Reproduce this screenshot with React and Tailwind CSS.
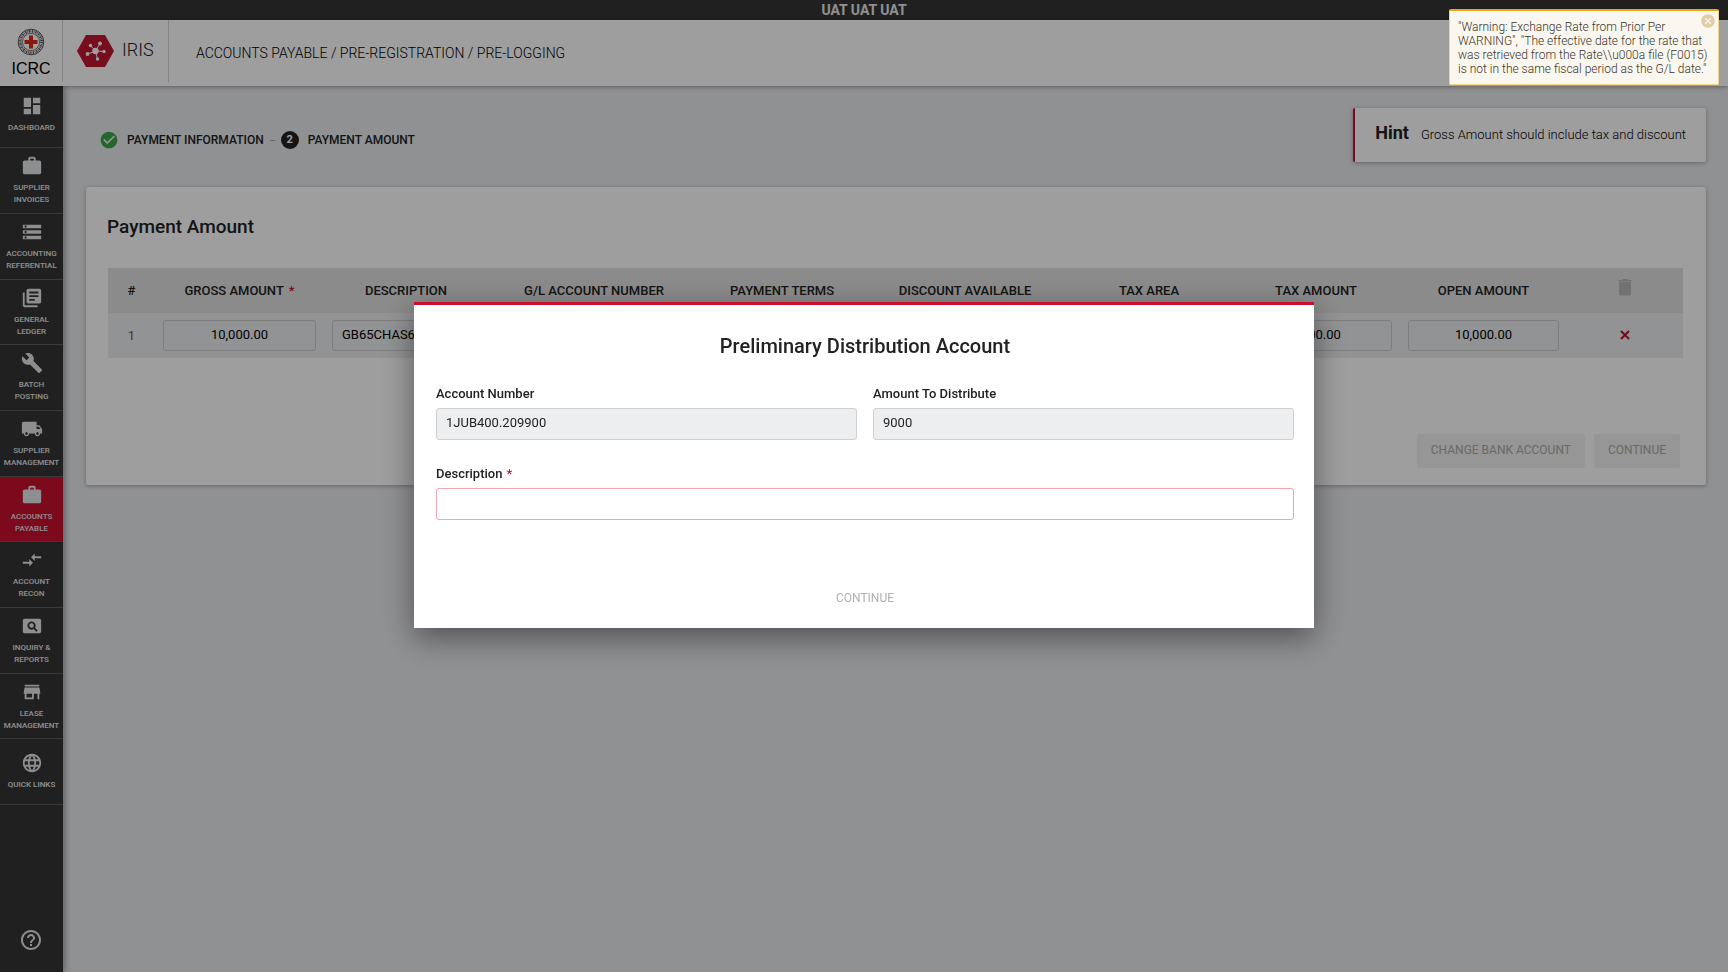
import { Fragment } from "react";
import {
  MdDashboard, MdWork, MdStorage, MdLibraryBooks, MdBuild, MdLocalShipping,
  MdCompareArrows, MdPageview, MdStore, MdLanguage, MdHelpOutline,
  MdCheckCircle, MdCancel,
} from "react-icons/md";

const NAV = [
  { label: ["Dashboard"], Icon: MdDashboard },
  { label: ["Supplier", "Invoices"], Icon: MdWork },
  { label: ["Accounting", "Referential"], Icon: MdStorage },
  { label: ["General", "Ledger"], Icon: MdLibraryBooks },
  { label: ["Batch", "Posting"], Icon: MdBuild },
  { label: ["Supplier", "Management"], Icon: MdLocalShipping },
  { label: ["Accounts", "Payable"], Icon: MdWork, active: true },
  { label: ["Account", "Recon"], Icon: MdCompareArrows },
  { label: ["Inquiry &", "Reports"], Icon: MdPageview },
  { label: ["Lease", "Management"], Icon: MdStore },
  { label: ["Quick Links"], Icon: MdLanguage },
];

const COLUMNS = [
  { title: "Gross Amount", width: 169, value: "10,000.00", required: true, center: true },
  { title: "Description", width: 164, value: "GB65CHAS6" },
  { title: "G/L Account Number", width: 212, value: "" },
  { title: "Payment Terms", width: 164, value: "" },
  { title: "Discount Available", width: 202, value: "", center: true },
  { title: "Tax Area", width: 166, value: "" },
  { title: "Tax Amount", width: 168, value: "1,000.00", center: true },
  { title: "Open Amount", width: 167, value: "10,000.00", center: true },
];

function IcrcLogo() {
  return (
    <svg viewBox="0 0 28 28" className="size-7" aria-hidden="true">
      <circle cx="14" cy="14" r="12.800" fill="#fff" stroke="#444" strokeWidth="0.9" />
      <circle cx="14" cy="14" r="10.700" fill="none" stroke="#555" strokeWidth="2.600" strokeDasharray="1.300 0.700 0.600 0.800" />
      <circle cx="14" cy="14" r="8.600" fill="#fff" stroke="#444" strokeWidth="0.700" />
      <path d="M12 7.500h4v4.500h4.500v4H16v4.500h-4V16H7.500v-4H12z" fill="#e2231a" />
    </svg>
  );
}

function IrisLogo() {
  return (
    <svg viewBox="0 0 37 32" className="h-8 w-[37px]" aria-hidden="true">
      <path d="M9 0h19l9 16-9 16H9L0 16z" fill="#c2152f" />
      <path
        d="M18.500 16L13.500 10.500M18.500 16L23 8.500M18.500 16L10.500 19M18.500 16L20.500 24M18.500 16L27 16.500"
        stroke="#fff"
        strokeWidth="1"
      />
      <g fill="#fff">
        <circle cx="18.500" cy="16" r="3.200" />
        <circle cx="13.500" cy="10.500" r="1.700" />
        <circle cx="23" cy="8.500" r="1.900" />
        <circle cx="10.500" cy="19" r="1.900" />
        <circle cx="20.500" cy="24" r="1.700" />
        <circle cx="27" cy="16.500" r="1.700" />
      </g>
    </svg>
  );
}

function TrashIcon() {
  return (
    <svg viewBox="0 0 14 17" className="mx-auto h-[17px] w-[14px]" fill="#b8b8b8" aria-hidden="true">
      <path d="M1 3h12v12a1.500 1.500 0 0 1-1.500 1.500h-9A1.500 1.500 0 0 1 1 15z" />
      <path d="M0.500 1h3.500l1-1h4l1 1h3.500v1.500h-13z" />
    </svg>
  );
}

function CrossIcon() {
  return (
    <svg viewBox="0 0 10 10" className="mx-auto size-[10px]" aria-hidden="true">
      <path d="M1 1l8 8M9 1l-8 8" stroke="#c8102e" strokeWidth="2" />
    </svg>
  );
}

function Header() {
  return (
    <header className="relative z-10 flex h-[66px] shrink-0 bg-white pb-1 shadow-[0_1px_4px_rgba(0,0,0,0.35)]">
      <a href="#home" className="flex w-[63px] shrink-0 flex-col items-center border-r border-[#d5d5d5] pt-2">
        <IcrcLogo />
        <span className="pt-px text-[16px] leading-6 text-black" style={{ fontFamily: '"Liberation Sans", sans-serif' }}>ICRC</span>
      </a>
      <a href="#iris" className="flex w-[106px] shrink-0 items-center gap-2 border-r border-[#d5d5d5] pl-[14px]">
        <IrisLogo />
        <span className="pb-[3px] text-[18px] font-light text-[#222]">IRIS</span>
      </a>
      <p className="flex items-center pt-1 pl-[27px] text-[14px] font-light text-black uppercase">
        Accounts Payable / Pre-Registration / Pre-Logging
      </p>
    </header>
  );
}

function Sidebar() {
  return (
    <aside className="flex w-[63px] shrink-0 flex-col justify-between bg-[#343434] text-[#e4e5e7] shadow-[2px_0_6px_rgba(0,0,0,0.35)]">
      <nav>
        {NAV.map(({ label, Icon, active }, i) => (
          <a
            key={i}
            href="#nav"
            className={`flex h-[66px] flex-col items-center justify-center gap-[5px] border-b border-[#5c5c5c] text-center text-[8px] leading-3 font-medium uppercase first:h-[62px] first:pb-1 nth-[3n+4]:h-[65px] ${active ? "bg-[#c8102e]" : ""}`}
          >
            <Icon className="size-[22px]" />
            <span>
              {label.map((line) => (
                <span key={line} className="block whitespace-nowrap">{line}</span>
              ))}
            </span>
          </a>
        ))}
      </nav>
      <button type="button" aria-label="Help" className="mb-5 flex justify-center pr-[2px]">
        <MdHelpOutline className="size-6" />
      </button>
    </aside>
  );
}

function Stepper() {
  return (
    <ol className="flex items-center pl-[13px] text-[12px] font-medium text-[#222] uppercase">
      <li className="flex items-center gap-2">
        <MdCheckCircle className="size-5 text-[#39a845]" />
        Payment Information
      </li>
      <li aria-hidden="true" className="mx-[6px] h-px w-[5px] bg-[#aaa]" />
      <li className="flex items-center gap-[9px]">
        <span className="flex size-[18px] items-center justify-center rounded-full bg-[#222] text-[11px] font-bold text-white">2</span>
        Payment Amount
      </li>
    </ol>
  );
}

function PaymentTable() {
  return (
    <table className="w-full table-fixed border-collapse">
      <colgroup>
        <col style={{ width: 47 }} />
        {COLUMNS.map((c) => <col key={c.title} style={{ width: c.width }} />)}
        <col style={{ width: 116 }} />
      </colgroup>
      <thead>
        <tr className="h-[45px] bg-[#e0e0e0] text-[13px] text-[#222] uppercase">
          <th className="font-medium">#</th>
          {COLUMNS.map((c) => (
            <th key={c.title} className="font-medium whitespace-nowrap">
              {c.title}
              {c.required && <span className="ml-[5px] text-[#c8102e]">*</span>}
            </th>
          ))}
          <th>
            <button type="button" aria-label="Delete all" className="block w-full pb-[6px]">
              <TrashIcon />
            </button>
          </th>
        </tr>
      </thead>
      <tbody>
        <tr className="h-[45px] bg-[#ebedf0]">
          <td className="text-center text-[13px] text-[#6b5a48]">1</td>
          {COLUMNS.map((c) => (
            <td key={c.title} className="px-2">
              <input
                aria-label={c.title}
                defaultValue={c.value}
                className={`h-[31px] w-full rounded-[3px] border border-[#ccc] bg-transparent px-[9px] pb-[2px] text-[13px] text-black ${c.center ? "text-center" : ""}`}
              />
            </td>
          ))}
          <td>
            <button type="button" aria-label="Remove row" className="block w-full pb-[2px]">
              <CrossIcon />
            </button>
          </td>
        </tr>
      </tbody>
    </table>
  );
}

function Field({ id, label, value, disabled, required, wide }) {
  return (
    <div className={wide ? "col-span-2" : ""}>
      <label htmlFor={id} className="mb-1 block text-[13px] leading-5 font-medium text-[#222]">
        {label}
        {required && <span className="ml-1 text-[#c8102e]">*</span>}
      </label>
      <input
        id={id}
        defaultValue={value}
        disabled={disabled}
        required={required}
        className={`block h-8 w-full rounded-[3px] border px-[9px] pb-1 text-[13px] text-[#222] ${disabled ? "border-[#cfd0d2] bg-[#edeef0]" : "border-[#f4a3b2] bg-white"}`}
      />
    </div>
  );
}

function Dialog() {
  return (
    <section
      role="dialog"
      aria-modal="true"
      aria-labelledby="dialog-title"
      className="mx-4 w-full max-w-[900px] border-t-[3px] border-[#c8102e] bg-white pr-5 pb-[15px] pl-[22px] shadow-[0_10px_30px_rgba(0,0,0,0.45)]"
    >
      <h2 id="dialog-title" className="pt-[27px] text-center text-[20px] leading-7 font-medium text-[#222]">
        Preliminary Distribution Account
      </h2>
      <form className="mt-6 grid grid-cols-2 gap-x-4 gap-y-6">
        <Field id="account" label="Account Number" value="1JUB400.209900" disabled />
        <Field id="amount" label="Amount To Distribute" value="9000" disabled />
        <Field id="description" label="Description" value="" required wide />
        <div className="col-span-2 mt-[39px] flex justify-center">
          <button type="button" disabled className="px-4 py-[6px] text-[12px] text-[#b0b0b0] uppercase">Continue</button>
        </div>
      </form>
    </section>
  );
}

function Toast() {
  return (
    <div role="alert" className="absolute top-[9px] right-[9px] w-[270px] rounded-[2px] border border-t-2 border-[#f0d48c] border-t-[#e6a817] bg-[#faf7f0] pt-[9px] pr-[10px] pb-2 pl-2 text-[12px] leading-[14px] font-light text-[#3a3526]">
      {[
        '"Warning: Exchange Rate from Prior Per',
        'WARNING", "The effective date for the rate that',
        "was retrieved from the Rate\\\\u000a file (F0015)",
        'is not in the same fiscal period as the G/L date."',
      ].map((line) => (
        <Fragment key={line}>
          <span className="whitespace-nowrap">{line}</span>
          <br />
        </Fragment>
      ))}
      <button type="button" aria-label="Dismiss" className="absolute top-[2px] right-[2px]">
        <MdCancel className="size-4 text-[#e0cda4]" />
      </button>
    </div>
  );
}

export default function App() {
  return (
    <div className="flex min-h-screen flex-col bg-[#e9eaed]" style={{ fontFamily: "Roboto, sans-serif" }}>
      <div className="h-5 shrink-0 bg-[#343434] text-center text-[14px] leading-5 font-bold text-[#e8e8e8]">UAT UAT UAT</div>
      <Header />
      <div className="flex flex-1">
        <Sidebar />
        <main className="min-w-0 flex-1 pt-[22px] pr-[22px] pb-6 pl-[23px]">
          <div className="flex items-center justify-between">
            <div className="pt-[10px]"><Stepper /></div>
            <aside className="flex h-[54px] items-center gap-3 rounded-[2px] border-l-2 border-[#c8102e] bg-white pr-5 pb-1 pl-5 text-[#222] shadow-[0_1px_4px_rgba(0,0,0,0.3)]">
              <strong className="pb-px text-[18px] font-bold">Hint</strong>
              <span className="pt-1 text-[13px] font-light text-black">Gross Amount should include tax and discount</span>
            </aside>
          </div>
          <section className="mt-[25px] rounded-[2px] bg-white pt-[26px] pr-[23px] pb-[17px] pl-[21px] shadow-[0_1px_4px_rgba(0,0,0,0.3)]">
            <h1 className="text-[19px] leading-7 font-medium text-[#222]">Payment Amount</h1>
            <div className="mt-[27px] pl-px"><PaymentTable /></div>
            <div className="mt-[76px] flex justify-end gap-[9px] pr-[3px]">
              <button type="button" disabled className="h-[34px] rounded-[2px] bg-[#f2f2f2] px-[14px] pb-[2px] text-[12px] text-[#aaa] uppercase">Change Bank Account</button>
              <button type="button" disabled className="h-[34px] rounded-[2px] bg-[#f2f2f2] px-[14px] pb-[2px] text-[12px] text-[#aaa] uppercase">Continue</button>
            </div>
          </section>
        </main>
      </div>
      <div className="fixed inset-0 z-20 flex items-start justify-center bg-black/38 pt-[302px]">
        <Dialog />
        <Toast />
      </div>
    </div>
  );
}
